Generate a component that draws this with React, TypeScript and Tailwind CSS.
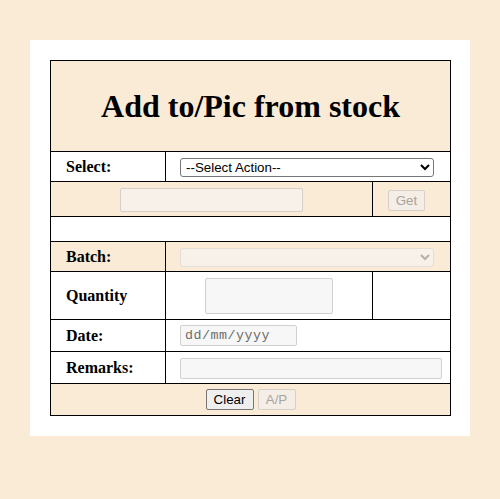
import React from "react";

const label = "pl-[15px] text-left font-bold text-[16px]";

export default function App() {
  return (
    <div className="min-h-screen bg-[#FAEBD7] pl-[30px] pt-[40px] font-['Liberation_Serif',serif] text-black">
      <div className="w-[440px] h-[396px] bg-white p-[20px]">
        <table className="w-[400px] table-fixed border-collapse border border-black">
          <colgroup>
            <col className="w-[115px]" />
            <col className="w-[207px]" />
            <col className="w-[78px]" />
          </colgroup>
          <tbody>
            <tr className="h-[91px] bg-[#FAEBD7]">
              <td colSpan={3} className="border border-black text-center">
                <h1 className="text-[32px] font-bold leading-none">Add to/Pic from stock</h1>
              </td>
            </tr>
            <tr className="h-[30px]">
              <td className={`border border-black ${label}`}>Select:</td>
              <td colSpan={2} className="border border-black pl-[14px]">
                <select className="w-[254px] h-[19px] border border-[#767676] rounded-[3px] bg-white text-[13.33px] font-['Liberation_Sans',sans-serif] pl-[1px]">
                  <option>--Select Action--</option>
                </select>
              </td>
            </tr>
            <tr className="h-[35px] bg-[#FAEBD7]">
              <td colSpan={2} className="border border-black text-center">
                <input
                  disabled
                  className="w-[183px] h-[24px] border border-[#d6d0c9] rounded-[2px] bg-[#F7F1EA] align-middle"
                />
              </td>
              <td className="border border-black pl-[15px]">
                <button
                  disabled
                  className="w-[37px] h-[21px] border border-[#d6d0c9] rounded-[2px] bg-[#F4EEE6] text-[13.33px] text-[#a9a49e] font-['Liberation_Sans',sans-serif] align-middle"
                >
                  Get
                </button>
              </td>
            </tr>
            <tr className="h-[25px]">
              <td colSpan={3} className="border border-black"></td>
            </tr>
            <tr className="h-[30px] bg-[#FAEBD7]">
              <td className={`border border-black ${label}`}>Batch:</td>
              <td colSpan={2} className="border border-black pl-[14px]">
                <select
                  disabled
                  className="w-[254px] h-[19px] border border-[#e3ddd5] rounded-[3px] bg-[#F7F1EA] text-[13.33px] text-[#b5b0aa] font-['Liberation_Sans',sans-serif]"
                >
                  <option></option>
                </select>
              </td>
            </tr>
            <tr className="h-[48px]">
              <td className={`border border-black ${label}`}>Quantity</td>
              <td className="border border-black text-center">
                <input className="w-[128px] h-[36px] border border-[#d0d0d0] rounded-[2px] bg-[#F7F7F7] align-middle" />
              </td>
              <td className="border border-black"></td>
            </tr>
            <tr className="h-[32px]">
              <td className={`border border-black ${label}`}>Date:</td>
              <td colSpan={2} className="border border-black pl-[14px]">
                <div className="w-[117px] h-[21px] border border-[#d0d0d0] rounded-[2px] bg-[#F7F7F7] flex items-center pl-[4px] text-[13.33px] text-[#6d6d6d] font-['Liberation_Mono',monospace] tracking-[0.5px]">
                  dd/mm/yyyy
                </div>
              </td>
            </tr>
            <tr className="h-[32px]">
              <td className={`border border-black ${label}`}>Remarks:</td>
              <td colSpan={2} className="border border-black pl-[14px]">
                <input className="w-[262px] h-[21px] border border-[#d0d0d0] rounded-[2px] bg-[#F7F7F7] align-middle" />
              </td>
            </tr>
            <tr className="h-[32px] bg-[#FAEBD7]">
              <td colSpan={3} className="border border-black text-center">
                <div className="flex justify-center gap-[4px]">
                  <button className="w-[48px] h-[21px] border border-[#767676] rounded-[2px] bg-[#EFEFEF] text-[13.33px] font-['Liberation_Sans',sans-serif]">
                    Clear
                  </button>
                  <button
                    disabled
                    className="w-[38px] h-[21px] border border-[#d6d0c9] rounded-[2px] bg-[#F4EEE6] text-[13.33px] text-[#a9a49e] font-['Liberation_Sans',sans-serif]"
                  >
                    A/P
                  </button>
                </div>
              </td>
            </tr>
          </tbody>
        </table>
      </div>
    </div>
  );
}
